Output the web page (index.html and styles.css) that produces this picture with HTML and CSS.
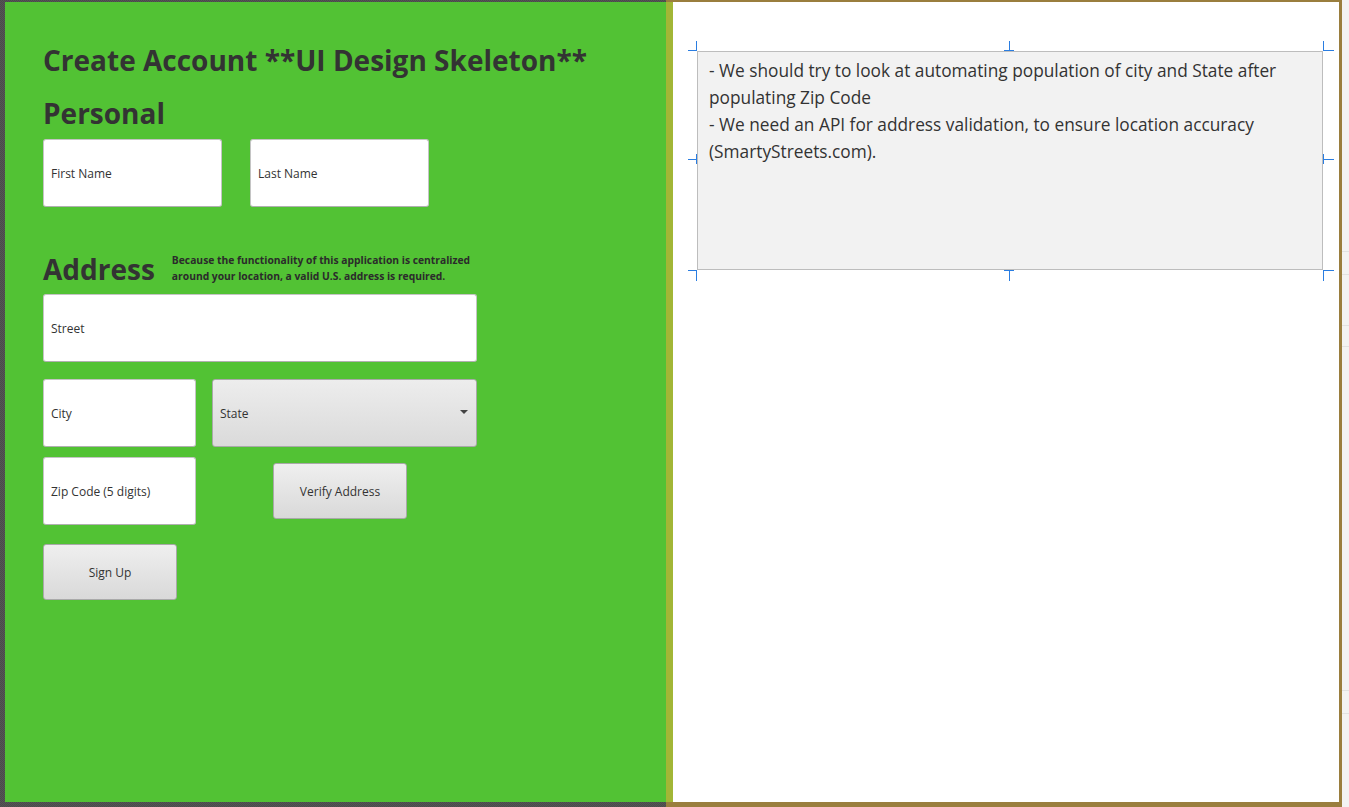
FILE: index.html
```html
<!DOCTYPE html>
<html>
<head>
<meta charset="utf-8">
<link rel="stylesheet" href="styles.css">
</head>
<body>
<div class="screen">
  <div class="left-wrap">
    <div class="left">
      <h1 class="title">Create Account **UI Design Skeleton**</h1>
      <h2 class="section">Personal</h2>
      <div class="row row-personal">
        <div class="field w-name"><span>First Name</span></div>
        <div class="field w-name"><span>Last Name</span></div>
      </div>
      <div class="address-head">
        <h2 class="section section-address">Address</h2>
        <p class="note">Because the functionality of this application is centralized<br>around your location, a valid U.S. address is required.</p>
      </div>
      <div class="field w-street"><span>Street</span></div>
      <div class="row row-city">
        <div class="field w-city"><span>City</span></div>
        <div class="combo"><span>State</span><i class="arrow"></i></div>
      </div>
      <div class="row row-zip">
        <div class="field w-city"><span>Zip Code (5 digits)</span></div>
        <div class="btn btn-verify">Verify Address</div>
      </div>
      <div class="btn btn-signup">Sign Up</div>
    </div>
  </div>
  <div class="right">
    <div class="strip"></div>
    <div class="canvas">
      <div class="notes-wrap">
        <div class="notes">- We should try to look at automating population of city and State after<br>populating Zip Code<br>- We need an API for address validation, to ensure location accuracy<br>(SmartyStreets.com).</div>
        <i class="h h-tl"></i>
        <i class="h h-tm"></i>
        <i class="h h-tr"></i>
        <i class="h h-ml"></i>
        <i class="h h-mr"></i>
        <i class="h h-bl"></i>
        <i class="h h-bm"></i>
        <i class="h h-br"></i>
      </div>
    </div>
  </div>
  <div class="gutter">
    <div class="g-line g1"></div>
    <div class="g-line g2"></div>
    <div class="g-line g3"></div>
    <div class="g-line g4"></div>
    <div class="g-line g5"></div>
    <div class="g-line g6"></div>
  </div>
</div>
</body>
</html>
```

FILE: styles.css
```css
html, body {
  margin: 0;
  padding: 0;
}
body {
  width: 1349px;
  height: 807px;
  overflow: hidden;
  font-family: "Open Sans", "Noto Sans", sans-serif;
  color: #333333;
}
.screen {
  display: flex;
  width: 1349px;
  height: 807px;
}
.left-wrap {
  width: 666px;
  height: 807px;
  box-sizing: border-box;
  padding: 2px 0 5px 5px;
  background-color: #4b4b4b;
  background-image:
    linear-gradient(45deg, #555 25%, transparent 25%, transparent 75%, #555 75%),
    linear-gradient(45deg, #555 25%, transparent 25%, transparent 75%, #555 75%);
  background-size: 2px 2px;
  background-position: 0 0, 1px 1px;
}
.left {
  width: 661px;
  height: 800px;
  background: #52c234;
  box-sizing: border-box;
  padding: 40px 0 0 38px;
}
.title {
  margin: 0;
  font-size: 28px;
  line-height: 36px;
  font-weight: 700;
  color: #333333;
  letter-spacing: 0;
}
.section {
  margin: 17px 0 0;
  font-size: 28px;
  line-height: 36px;
  font-weight: 700;
  color: #333333;
}
.row {
  display: flex;
  align-items: center;
}
.row-personal {
  margin-top: 8px;
  gap: 28px;
}
.field {
  box-sizing: border-box;
  height: 68px;
  background: #ffffff;
  border: 1px solid #c4c4c4;
  border-bottom-color: #b0b0b0;
  border-radius: 3px;
  display: flex;
  align-items: center;
  padding-left: 7px;
  font-size: 12px;
  color: #333;
}
.w-name { width: 179px; }
.w-street { width: 434px; }
.w-city { width: 153px; }
.address-head {
  display: flex;
  align-items: center;
  margin-top: 43px;
  height: 36px;
  gap: 17px;
}
.section-address {
  margin: 0;
  font-size: 28px;
  position: relative;
  top: 1px;
}
.note {
  margin: 0;
  font-size: 10.3px;
  line-height: 16px;
  font-weight: 700;
  color: #2b2b2b;
}
.address-head + .field {
  margin-top: 8px;
}
.row-city {
  margin-top: 17px;
  gap: 16px;
}
.combo {
  box-sizing: border-box;
  width: 265px;
  height: 68px;
  border: 1px solid #a9a9a9;
  border-radius: 3px;
  background: linear-gradient(#ededed, #dadada);
  display: flex;
  align-items: center;
  justify-content: space-between;
  padding: 0 8px 0 7px;
  font-size: 12px;
}
.arrow {
  width: 0;
  height: 0;
  border-left: 4px solid transparent;
  border-right: 4px solid transparent;
  border-top: 4px solid #444;
  margin-top: -3px;
}
.row-zip {
  margin-top: 10px;
  gap: 0;
}
.btn {
  box-sizing: border-box;
  width: 134px;
  height: 56px;
  border: 1px solid #a9a9a9;
  border-radius: 3px;
  background: linear-gradient(#efefef, #d9d9d9);
  display: flex;
  align-items: center;
  justify-content: center;
  font-size: 12px;
  color: #333;
}
.btn-verify {
  margin-left: 77px;
}
.btn-signup {
  margin-top: 19px;
}
.right {
  width: 676px;
  height: 807px;
  box-sizing: border-box;
  border-style: solid;
  border-color: #9a7e3e;
  border-width: 2px 3px 5px 0;
  display: flex;
}
.strip {
  width: 7px;
  background: #a2b636;
}
.canvas {
  flex: 1;
  background: #ffffff;
  padding: 49px 0 0 24px;
}
.notes-wrap {
  position: relative;
  width: 626px;
  height: 219px;
}
.notes {
  box-sizing: border-box;
  width: 626px;
  height: 219px;
  background: #f2f2f2;
  border: 1px solid #bdbdbd;
  padding: 5px 11px;
  font-size: 17.3px;
  line-height: 27px;
  color: #333;
}
.h {
  position: absolute;
  border: 0 solid #2a7de1;
}
.h-tl { left: -9px; top: -10px; width: 8px; height: 9px; border-right-width: 1px; border-bottom-width: 1px; }
.h-tr { right: -11px; top: -10px; width: 10px; height: 9px; border-left-width: 1px; border-bottom-width: 1px; }
.h-bl { left: -9px; bottom: -11px; width: 8px; height: 10px; border-right-width: 1px; border-top-width: 1px; }
.h-br { right: -11px; bottom: -11px; width: 10px; height: 10px; border-left-width: 1px; border-top-width: 1px; }
.h-tm { left: 307px; top: -10px; width: 10px; height: 9px; border-bottom-width: 1px; }
.h-tm::after { content: ""; position: absolute; left: 5px; top: 0; width: 1px; height: 9px; background: #2a7de1; }
.h-bm { left: 307px; bottom: -11px; width: 10px; height: 10px; border-top-width: 1px; }
.h-bm::after { content: ""; position: absolute; left: 5px; top: 0; width: 1px; height: 10px; background: #2a7de1; }
.h-ml { left: -9px; top: 103px; width: 8px; height: 10px; border-right-width: 1px; }
.h-ml::after { content: ""; position: absolute; left: 0; top: 5px; width: 8px; height: 1px; background: #2a7de1; }
.h-mr { right: -11px; top: 103px; width: 10px; height: 10px; border-left-width: 1px; }
.h-mr::after { content: ""; position: absolute; left: 0; top: 5px; width: 10px; height: 1px; background: #2a7de1; }
.gutter {
  flex: 1;
  background: #f3f3f3;
  position: relative;
}
.g-line {
  height: 1px;
  background: #e2e2e2;
  margin-top: 0;
}
.g1 { margin-top: 251px; }
.g2 { margin-top: 22px; }
.g3 { margin-top: 50px; }
.g4 { margin-top: 20px; }
.g5 { margin-top: 343px; }
.g6 { margin-top: 22px; }
```
